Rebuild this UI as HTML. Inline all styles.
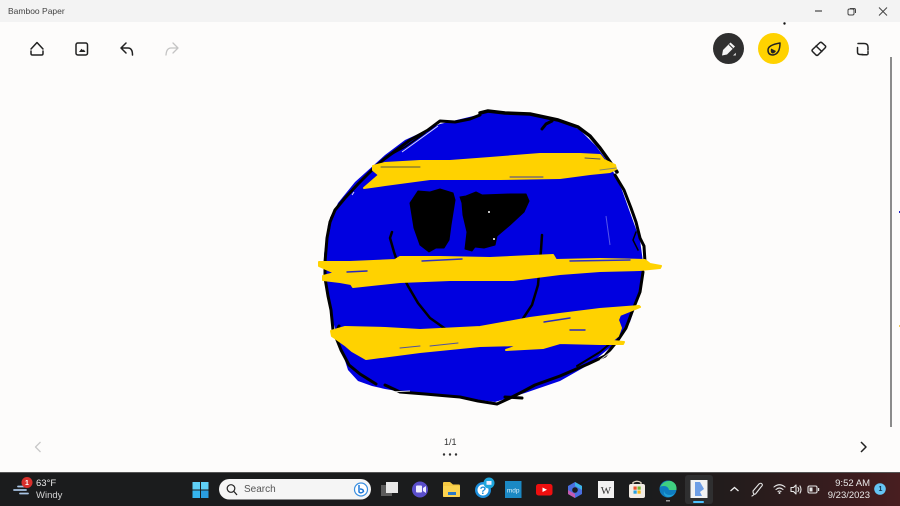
<!DOCTYPE html>
<html lang="en">
<head>
<meta charset="utf-8">
<title>Bamboo Paper</title>
<style>
html,body{margin:0;padding:0;width:900px;height:506px;overflow:hidden;background:#fcfbfa;font-family:"Liberation Sans",sans-serif}
.abs{position:absolute}
#title{left:0;top:0;width:900px;height:22px;background:#f3f3f3}
#tbtext{left:8px;top:6px;font-size:8.5px;line-height:10px;color:#444}
#task{left:0;top:472px;width:900px;height:34px;background:linear-gradient(90deg,#1b1c1d 0,#1b1c1d 72%,#241c1c 82%,#3c1c1e 95%,#481e20 100%);border-top:1px solid #555;box-sizing:border-box}
.t{position:absolute;color:#e8e8e8;font-size:9.500px;line-height:11px;white-space:nowrap}
svg{position:absolute;left:0;top:0}
</style>
</head>
<body>
<div class="abs" id="title"></div>
<div class="abs" id="tbtext">Bamboo Paper</div>
<div class="abs" style="left:0;top:22px;width:900px;height:450px;background:#fdfcfb"></div>
<div class="abs" style="left:890px;top:57px;width:2px;height:370px;background:#8b8b8b"></div>
<div class="abs" id="task"></div>

<svg width="900" height="506" viewBox="0 0 900 506">
<!-- Drawing: blue fill -->
<path d="M490 112 L530 114 L560 120 L580 130 L596 146 L610 165 L622 190 L632 218 L640 240 L643 262 L641 290 L630 322 L612 346 L590 364 L560 381 L525 393 L495 402 L455 397 L415 394 L385 389 L372 386 L358 381 L348 370 L340 345 L331 315 L326 285 L324 255 L328 225 L338 203 L355 182 L385 155 L405 140 L440 124 Z" fill="#0000e0"/>
<!-- outline -->
<g fill="none" stroke="#000" stroke-linecap="round" stroke-linejoin="round">
<path d="M480 113 L488 111 L505 113 L530 114 L558 120 L578 127 L590 136 L600 148 L610 162 L617 172" stroke-width="3.500"/>
<path d="M615 175 L624 190 L631 208 L636 222 L640 238 L644 246 L645 262" stroke-width="3"/>
<path d="M636 232 L633 240 L638 250" stroke-width="1.500"/>
<path d="M643 272 L640 292 L632 312 L626 328 L618 340 L605 356 L588 364 L560 376 L535 385 L522 392 L510 398 L497 404 L478 401 L460 397 L448 396 L425 394 L400 392 L385 385" stroke-width="3"/>
<path d="M577 366 L600 352 L612 342" stroke-width="2"/>
<path d="M505 397 L522 398" stroke-width="3"/>
<path d="M376 384 L360 374 L349 365 L341 350 L335 335 L339 326" stroke-width="3"/>
<path d="M333 330 L331 310 L328 296 L325 278 L325 262 L327 238 L330 222 L335 210 L345 198 L358 184 L372 170 L383 160 L410 140 L428 130 L440 121 L455 122 L470 119 L480 115" stroke-width="3"/>
<path d="M335 210 L331 218 L328 235" stroke-width="2"/>
<path d="M385 158 L405 147 L425 133" stroke-width="1.500"/>
<path d="M542 129 L546 124 L552 121" stroke-width="3"/>
</g>
<!-- white slivers -->
<g fill="none" stroke="#fff" stroke-width="1" opacity=".85">
<path d="M352 195 L354 192"/><path d="M402 152 L438 126"/><path d="M606 216 L610 245" opacity=".4"/>
<path d="M620 345 L600 360"/><path d="M390 392 L410 391"/>
</g>
<!-- eyes -->
<path d="M410 203 L418 191 L430 192 L440 189 L453 193 L455 200 L451 225 L449 240 L444 248 L436 248 L429 252 L420 245 L414 228 Z" fill="#000" stroke="#000" stroke-linejoin="round"/>
<path d="M460 197 L466 196 L476 192 L482 195 L510 194 L526 194 L529 201 L524 212 L510 225 L497 236 L495 245 L484 248 L475 247 L472 251 L465 249 L467 232 L463 215 L462 203 Z" fill="#000" stroke="#000" stroke-linejoin="round"/>
<g fill="#fff"><circle cx="489" cy="212" r="1"/><circle cx="494" cy="239" r="1"/></g>
<!-- smile -->
<g fill="none" stroke="#000" stroke-width="2.500" stroke-linecap="round">
<path d="M392 232 L390 238 L394 252 L400 270 L408 286 L418 303 L430 318 L447 330"/>
<path d="M542 235 L541 250 L538 285 L532 305 L522 320"/>
</g>
<!-- yellow bands -->
<g fill="#ffd200" stroke="#ffd200" stroke-width="2" stroke-linejoin="round">
<path d="M373 166 L385 163 L420 161 L450 161 L490 158 L540 154 L580 154 L600 155 L604 160 L615 165 L616 169 L610 172 L590 174 L560 178 L500 179 L430 179 L385 185 L364 188 L379 175 L373 170 Z"/>
<path d="M319 262 L350 262 L395 260 L400 257 L440 257 L490 258 L553 255 L556 260 L600 259 L645 260 L650 264 L661 266 L660 268 L640 270 L600 271 L560 274 L513 280 L450 280 L400 282 L353 287 L351 284 L340 282 L323 280 L323 276 L335 273 L319 266 Z"/>
<path d="M331 331 L345 327 L385 328 L420 330 L480 327 L530 318 L560 314 L600 309 L639 306 L640 307 L620 315 L618 320 L621 328 L618 336 L612 341 L624 342 L623 344 L600 344 L560 343 L543 348 L506 350 L520 345 L480 346 L420 352 L366 359 L352 351 L345 345 L335 338 L332 336 Z"/>
</g>
<g fill="none" stroke-linecap="round">
<path d="M585 158 L600 159" stroke="#555"/><path d="M510 177 L543 177" stroke="#3c3ca0"/>
<path d="M600 170 L616 168" stroke="#886"/><path d="M381 167 L420 167" stroke="#554"/>
<path d="M422 261 L462 259" stroke="#3030c0" stroke-width="1.400"/><path d="M347 272 L367 271" stroke="#2828c0" stroke-width="1.400"/>
<path d="M544 322 L570 318" stroke="#2828c0" stroke-width="1.400"/><path d="M400 348 L420 346" stroke="#5050a0"/><path d="M430 346 L458 343" stroke="#5050a0"/>
<path d="M570 261 L630 260" stroke="#3030c0" stroke-width="1.400"/><path d="M570 330 L585 330" stroke="#2828c0" stroke-width="1.400"/>
</g>
<!-- side marks -->
<rect x="899" y="211" width="1" height="2" fill="#2222cc"/>
<rect x="899" y="325" width="1" height="2" fill="#f3c95a"/>
<circle cx="784.500" cy="23.500" r="1.200" fill="#111"/>

<!-- title bar controls -->
<g fill="none" stroke="#444" stroke-width="1">
<path d="M815 11 H822" stroke-width="1.200"/>
<rect x="848" y="9" width="6" height="6" rx="1.500"/><path d="M850 8.500 H854 Q855.500 8.500 855.500 10 V13"/>
<path d="M879 7.500 L887 15.500 M887 7.500 L879 15.500"/>
</g>

<!-- toolbar left -->
<g fill="none" stroke="#222" stroke-width="1.500" stroke-linecap="round" stroke-linejoin="round">
<path d="M31 49 L37 42.500 L43 49 M43 51 V53.500 Q43 55 41.500 55 H32.500 Q31 55 31 53.500 V51"/>
<rect x="76" y="43" width="11.500" height="12" rx="1.800"/>
<path d="M126 43 L121 48 L126 53 M121 48 H128 Q132.500 48 132.500 55"/>
</g>
<path d="M79 52 L81.500 48.800 L83 50.300 L83.800 49.500 L85.500 52 Z" fill="#222"/>
<path d="M173 43 L178 48 L173 53 M178 48 H171 Q166.500 48 166 55" fill="none" stroke="#c4c4c4" stroke-width="1.300" stroke-linecap="round" stroke-linejoin="round"/>

<!-- toolbar right -->
<circle cx="728.500" cy="48.500" r="15.500" fill="#2f2f2f"/>
<path d="M723 50 L730.500 42.500 L735 46.500 L727 54.500 L722 55.500 Z" fill="#f4f4f4"/>
<path d="M729 44.500 L733 48.500" stroke="#2f2f2f" stroke-width="1"/>
<path d="M733 55.500 L735.800 55.500 L735.800 52.700 Z" fill="#ddd"/>
<circle cx="773.500" cy="48.500" r="15.500" fill="#ffd200"/>
<path d="M768 50 Q768 45 780 43 Q780 54 773 55 Q768 55 768 50 Z" fill="none" stroke="#222" stroke-width="1.500" stroke-linejoin="round"/>
<path d="M771 48.500 L776 51 Q774.500 53.500 772.500 53.500 Q770 53 771 48.500 Z" fill="#222"/>
<g fill="none" stroke="#222" stroke-width="1.500" stroke-linejoin="round" stroke-linecap="round">
<path d="M812.500 49.500 L820 42.500 Q821 42 822 42.800 L825.500 46 Q826 47 825 48 L818 55 Q817 55.800 816 55 L812.500 51.500 Q811.500 50.500 812.500 49.500 Z"/><path d="M816 46 L821.800 51.500"/>
<path d="M858 43.500 H864 Q868 43.500 868 47 V50 M863 54.500 H860 Q857.500 54.500 857.500 52 V47.500 M868 54 V51.500 M862 54.700 H867"/>
</g>

<!-- nav arrows -->
<path d="M40.500 442 L35.500 447 L40.500 452" fill="none" stroke="#c8c8c8" stroke-width="1.300" stroke-linejoin="round"/>
<path d="M861 442 L866 447 L861 452" fill="none" stroke="#222" stroke-width="1.500" stroke-linejoin="round"/>
<g fill="#333"><circle cx="444" cy="454.500" r="1.200"/><circle cx="450" cy="454.500" r="1.200"/><circle cx="456" cy="454.500" r="1.200"/></g>

<!-- taskbar: weather -->
<g fill="none" stroke="#a9c4e4" stroke-width="1.800" stroke-linecap="round"><path d="M14 490 H26"/><path d="M18 486.500 H28"/><path d="M20 493.500 H28"/></g>
<circle cx="27" cy="482.500" r="5.500" fill="#d9302c"/>
<!-- win logo -->
<g fill="#35b4ee">
<rect x="192.500" y="482" width="7.500" height="7.500" fill="#5fd0f6"/><rect x="201" y="482" width="7.500" height="7.500" fill="#5fd0f6"/>
<rect x="192.500" y="490.500" width="7.500" height="7.500"/><rect x="201" y="490.500" width="7.500" height="7.500" fill="#2a9de0"/>
</g>
<!-- search pill -->
<rect x="219" y="479" width="152" height="20.500" rx="10.200" fill="#f5f5f5"/>
<circle cx="231" cy="488.500" r="3.800" fill="none" stroke="#222" stroke-width="1.200"/><path d="M234 491.500 L237 495" stroke="#222" stroke-width="1.300"/>
<circle cx="361" cy="489.500" r="6.500" fill="#fff" stroke="#3a8fe0" stroke-width="1.200"/>
<path d="M359 485 V492 Q361 494 363.500 491.500 Q363.500 489 360 489" fill="none" stroke="#1f78d8" stroke-width="1.500"/>
<!-- task view -->
<rect x="381" y="485" width="11" height="11" fill="#5c5c5c"/><rect x="386" y="482" width="12" height="11" fill="#e8e8e8"/>
<!-- meet -->
<circle cx="420" cy="489.500" r="8" fill="#5a4ecb"/><rect x="416" y="485.500" width="6" height="7" rx="1" fill="#f0eeff"/><path d="M423 488 L426 486 V493 L423 491 Z" fill="#f0eeff"/>
<!-- folder -->
<path d="M443 483 Q443 482 444 482 H450 L453 484.500 H459 Q460 484.500 460 486 V496 Q460 497 459 497 H444 Q443 497 443 496 Z" fill="#f5c842"/>
<rect x="443" y="486" width="17" height="11" rx="1" fill="#fbd350"/><rect x="448" y="492" width="8" height="3" fill="#2a78c6"/>
<!-- help -->
<circle cx="483" cy="490" r="8" fill="#1d8fdc"/><circle cx="483" cy="490" r="5.500" fill="#fff"/>
<text x="483" y="494" font-family="Liberation Sans,sans-serif" font-size="11" font-weight="700" fill="#1d8fdc" text-anchor="middle">?</text>
<circle cx="489" cy="483" r="5.500" fill="#1ea6dc"/><rect x="486.500" y="481" width="5" height="3.800" fill="#eef"/>
<!-- mdp -->
<rect x="505" y="481" width="16.500" height="17" fill="#1b89c4"/>
<text x="513.200" y="492.500" font-family="Liberation Sans,sans-serif" font-size="6.500" fill="#d8f0fb" text-anchor="middle">mdp</text>
<!-- youtube -->
<rect x="536" y="484" width="16.500" height="11.500" rx="2.500" fill="#ee0f0f"/><path d="M542.500 487.500 L547 489.800 L542.500 492 Z" fill="#fff"/>
<!-- copilot -->
<path d="M575 482 L582 486 V494 L575 498 L568 494 V486 Z" fill="#4a6fe0"/><path d="M575 482 L582 486 V490 L575 486 Z" fill="#3cb4e8"/><path d="M568 490 L575 494 V498 L568 494 Z" fill="#c45ab0"/><circle cx="575" cy="490" r="2.800" fill="#1b1c1d"/>
<!-- wiki -->
<rect x="598" y="481" width="16" height="17" fill="#f2f2f2"/>
<text x="606" y="494" font-family="Liberation Serif,serif" font-size="11" fill="#333" text-anchor="middle">W</text>
<!-- store -->
<rect x="629" y="484" width="16" height="14" rx="2" fill="#f1ece4"/><path d="M633 484 V482.500 Q637 480 641 482.500 V484" fill="none" stroke="#e6dccb" stroke-width="1.200"/>
<rect x="633.500" y="486.500" width="3.200" height="3.200" fill="#e8512a"/><rect x="637.500" y="486.500" width="3.200" height="3.200" fill="#74b52c"/><rect x="633.500" y="490.500" width="3.200" height="3.200" fill="#25a0e0"/><rect x="637.500" y="490.500" width="3.200" height="3.200" fill="#f5b916"/>
<!-- edge -->
<circle cx="668" cy="489" r="8.500" fill="#0f7cc0"/><path d="M660 487 Q664 480 671 481 Q677 483 676.500 490 L669 490 Q668 486 664 486 Q661 486 660 487 Z" fill="#3fcf80"/><path d="M664 491 Q665 495 670 495 Q673 495 675 493 Q672 498 667 497 Q663 495 664 491 Z" fill="#1fa0d8"/>
<rect x="666" y="500" width="4" height="1.500" fill="#9a9a9a"/>
<!-- selected app -->
<rect x="685" y="475" width="28" height="29" rx="3" fill="#2f2f30"/>
<rect x="690.500" y="480" width="17" height="18" fill="#f2f2f2"/>
<path d="M695 482 H700 L704 489 L700 492 L702 496 H695 Z" fill="#6f9fe6"/>
<rect x="693" y="501" width="11" height="2" rx="1" fill="#4cc2ff"/>
<!-- tray -->
<path d="M730.500 491 L734.500 487.500 L738.500 491" fill="none" stroke="#eee" stroke-width="1.300"/>
<g fill="none" stroke="#e6e6e6" stroke-width="1.100" stroke-linecap="round" stroke-linejoin="round">
<path d="M753 491 L759 484 Q761 482.500 762 484 Q763 485.500 761 487 L755.500 494 Q753 495 753 491 Z M752 496 Q753 495.500 754 494.500"/>
<path d="M774 487 Q779.500 482.500 785 487 M776 489.500 Q779.500 486.500 783 489.500 M778 491.500 Q779.500 490.500 781 491.500"/>
<path d="M791 487.500 H793.500 L796 485 V494 L793.500 491.500 H791 Z M798 487.500 Q799.500 489.500 798 491.500 M800 486 Q802 489.500 800 493"/>
<rect x="808" y="486" width="9" height="7" rx="1.500"/>
</g>
<circle cx="779.500" cy="493" r="1" fill="#e6e6e6"/>
<rect x="809.500" y="487.500" width="3" height="4" fill="#e6e6e6"/><rect x="818" y="488" width="1.200" height="3" fill="#e6e6e6"/>
<circle cx="880" cy="489" r="5.800" fill="#65c5f5"/>
</svg>

<div class="t" style="left:36px;top:478px">63°F</div>
<div class="t" style="left:36px;top:490px;color:#d4d4d4">Windy</div>
<div class="t" style="left:25px;top:477.500px;width:4px;font-size:7px;font-weight:700;color:#fff">1</div>
<div class="t" style="left:244px;top:484px;font-size:10px;color:#555">Search</div>
<div class="t" style="left:444px;top:437px;font-size:9px;color:#333">1/1</div>
<div class="t" style="left:820px;top:478px;width:50px;text-align:right">9:52 AM</div>
<div class="t" style="left:820px;top:490px;width:50px;text-align:right">9/23/2023</div>
<div class="t" style="left:878.500px;top:484px;font-size:7px;font-weight:700;color:#12324a">1</div>
</body>
</html>
